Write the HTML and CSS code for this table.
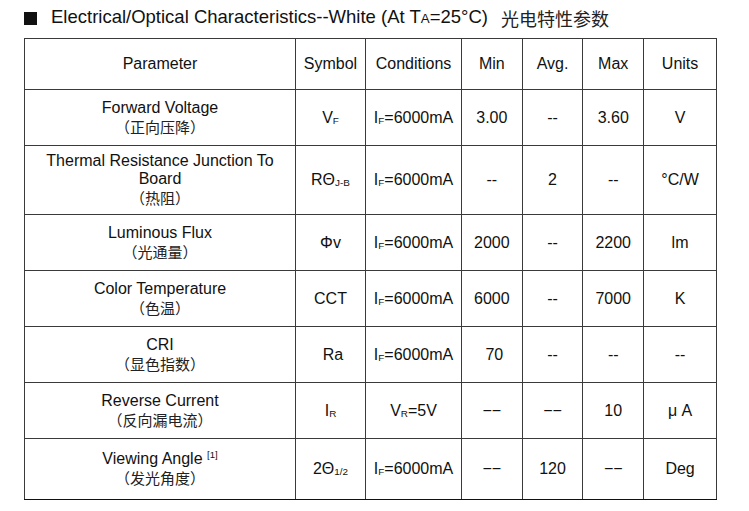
FILE: index.html
```html
<!DOCTYPE html>
<html lang="en">
<head>
<meta charset="utf-8">
<title>Electrical/Optical Characteristics</title>
<link rel="stylesheet" href="styles.css">
</head>
<body>
<div class="page">
  <h1 class="title"><span class="square"></span><span>Electrical/Optical Characteristics--White (At T<span class="sm">A</span>=25°C)</span><span class="cn-title">光电特性参数</span></h1>
  <table class="spec">
    <colgroup>
      <col class="c-param"><col class="c-sym"><col class="c-cond"><col class="c-num"><col class="c-num"><col class="c-num"><col class="c-unit">
    </colgroup>
    <tr class="r-head">
      <td>Parameter</td><td>Symbol</td><td>Conditions</td><td>Min</td><td>Avg.</td><td>Max</td><td>Units</td>
    </tr>
    <tr class="r-std">
      <td><div class="en">Forward Voltage</div><div class="cn"><span class="po">（</span>正向压降<span class="pc">）</span></div></td>
      <td>V<span class="sub">F</span></td><td>I<span class="sub">F</span>=6000mA</td><td>3.00</td><td>--</td><td>3.60</td><td>V</td>
    </tr>
    <tr class="r-tall">
      <td><div class="en">Thermal Resistance Junction To</div><div class="en">Board</div><div class="cn"><span class="po">（</span>热阻<span class="pc">）</span></div></td>
      <td>RΘ<span class="sub">J-B</span></td><td>I<span class="sub">F</span>=6000mA</td><td>--</td><td>2</td><td>--</td><td>°C/W</td>
    </tr>
    <tr class="r-std">
      <td><div class="en">Luminous Flux</div><div class="cn"><span class="po">（</span>光通量<span class="pc">）</span></div></td>
      <td>Φv</td><td>I<span class="sub">F</span>=6000mA</td><td>2000</td><td>--</td><td>2200</td><td>lm</td>
    </tr>
    <tr class="r-std">
      <td><div class="en">Color Temperature</div><div class="cn"><span class="po">（</span>色温<span class="pc">）</span></div></td>
      <td>CCT</td><td>I<span class="sub">F</span>=6000mA</td><td>6000</td><td>--</td><td>7000</td><td>K</td>
    </tr>
    <tr class="r-std">
      <td><div class="en">CRI</div><div class="cn"><span class="po">（</span>显色指数<span class="pc">）</span></div></td>
      <td><span class="nudge">Ra</span></td><td>I<span class="sub">F</span>=6000mA</td><td><span class="nudge">70</span></td><td>--</td><td>--</td><td>--</td>
    </tr>
    <tr class="r-std">
      <td><div class="en">Reverse Current</div><div class="cn"><span class="po">（</span>反向漏电流<span class="pc">）</span></div></td>
      <td>I<span class="sub">R</span></td><td>V<span class="sub">R</span>=5V</td><td>−−</td><td>−−</td><td>10</td><td>μ A</td>
    </tr>
    <tr class="r-last">
      <td><div class="en">Viewing Angle <span class="sup">[1]</span></div><div class="cn"><span class="po">（</span>发光角度<span class="pc">）</span></div></td>
      <td>2Θ<span class="sub">1/2</span></td><td>I<span class="sub">F</span>=6000mA</td><td>−−</td><td>120</td><td>−−</td><td>Deg</td>
    </tr>
  </table>
</div>
</body>
</html>
```
FILE: styles.css
```css
html, body {
  margin: 0;
  padding: 0;
  background: #ffffff;
}
body {
  font-family: "Liberation Sans", Arial, sans-serif;
  color: #111111;
}
.page {
  padding: 0 0 0 24px;
}
.title {
  display: flex;
  align-items: center;
  height: 20px;
  margin: 8px 0 10px 0;
  font-size: 18.5px;
  line-height: 20px;
  font-weight: normal;
  color: #111111;
  white-space: nowrap;
}
.square {
  width: 13px;
  height: 13px;
  background: #111111;
  margin-right: 14px;
  flex: none;
}
.sm {
  font-size: 0.72em;
}
.cn-title {
  font-family: "Noto Sans CJK SC", sans-serif;
  font-size: 18px;
  margin-left: 13px;
  color: #222222;
}
.spec {
  border-collapse: collapse;
  table-layout: fixed;
  width: 693px;
}
.c-param { width: 271px; }
.c-sym { width: 70px; }
.c-cond { width: 96px; }
.c-num { width: 60.7px; }
.c-unit { width: 73px; }
.spec td {
  border: 1px solid #3a3a3a;
  text-align: center;
  vertical-align: middle;
  padding: 0;
  font-size: 16px;
  line-height: 18px;
  white-space: nowrap;
}
.r-head td { height: 50px; }
.r-std td { height: 55px; }
.r-tall td { height: 68px; }
.r-last td { height: 60px; border-bottom: 1px solid #111111; }
.en {
  line-height: 18px;
}
.cn {
  font-family: "Noto Sans CJK SC", sans-serif;
  font-size: 15px;
  line-height: 20px;
  color: #222222;
}
.po, .pc {
  display: inline-block;
  width: 1em;
}
.po { text-align: right; }
.pc { text-align: left; }
.sub {
  font-size: 0.62em;
  vertical-align: -1px;
  line-height: 0;
}
.sup {
  font-size: 0.6em;
  vertical-align: 6px;
  line-height: 0;
}
.nudge {
  display: inline-block;
  margin-left: 5px;
}
```
